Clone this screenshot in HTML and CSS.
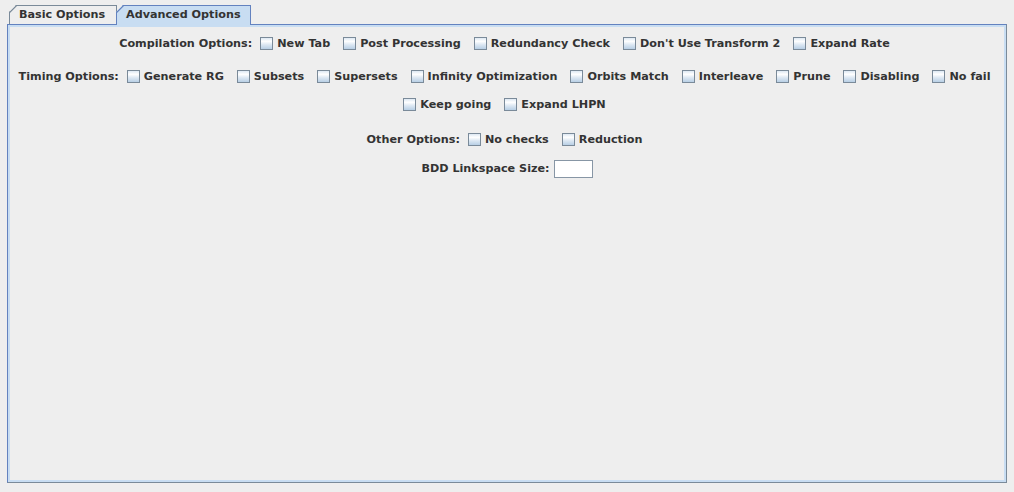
FILE: index.html
```html
<!DOCTYPE html>
<html>
<head>
<meta charset="utf-8">
<link rel="stylesheet" href="styles.css">
</head>
<body>
<div class="window">
  <div class="tabs">
    <div class="tab tab-basic">Basic Options</div>
    <div class="tab tab-adv selected">Advanced Options</div>
  </div>
  <div class="panel">
    <div class="row r1">
      <span class="label">Compilation Options:</span>
      <label class="cb"><span class="box"></span>New Tab</label>
      <label class="cb"><span class="box"></span>Post Processing</label>
      <label class="cb"><span class="box"></span>Redundancy Check</label>
      <label class="cb"><span class="box"></span>Don't Use Transform 2</label>
      <label class="cb"><span class="box"></span>Expand Rate</label>
    </div>
    <div class="row r2">
      <span class="label">Timing Options:</span>
      <label class="cb"><span class="box"></span>Generate RG</label>
      <label class="cb"><span class="box"></span>Subsets</label>
      <label class="cb"><span class="box"></span>Supersets</label>
      <label class="cb"><span class="box"></span>Infinity Optimization</label>
      <label class="cb"><span class="box"></span>Orbits Match</label>
      <label class="cb"><span class="box"></span>Interleave</label>
      <label class="cb"><span class="box"></span>Prune</label>
      <label class="cb"><span class="box"></span>Disabling</label>
      <label class="cb"><span class="box"></span>No fail</label>
    </div>
    <div class="row r2b">
      <label class="cb"><span class="box"></span>Keep going</label>
      <label class="cb"><span class="box"></span>Expand LHPN</label>
    </div>
    <div class="row r3">
      <span class="label">Other Options:</span>
      <label class="cb"><span class="box"></span>No checks</label>
      <label class="cb"><span class="box"></span>Reduction</label>
    </div>
    <div class="row r4">
      <span class="label">BDD Linkspace Size:</span>
      <span class="field"></span>
    </div>
  </div>
</div>
</body>
</html>
```

FILE: styles.css
```css
html, body {
  margin: 0;
  padding: 0;
  background: #eeeeee;
}

body {
  font-family: "DejaVu Sans", sans-serif;
  font-weight: bold;
  font-size: 11.2px;
  color: #333333;
}

.window {
  box-sizing: border-box;
  height: 492px;
  padding: 5px 7px 9px 7px;
  display: flex;
  flex-direction: column;
}

.tabs {
  display: flex;
  height: 19px;
  padding-left: 2px;
  position: relative;
  z-index: 1;
}

.tab {
  position: relative;
  box-sizing: border-box;
  height: 19px;
  border: 1px solid #7a8a99;
  border-bottom: none;
  padding-left: 9px;
  line-height: 18px;
  white-space: nowrap;
  background: #eeeeee;
  clip-path: polygon(7px 0, 100% 0, 100% 100%, 0 100%, 0 7px);
}

.tab::before {
  content: "";
  position: absolute;
  left: -1px;
  top: -1px;
  width: 8px;
  height: 8px;
  background: linear-gradient(to bottom right,
    transparent calc(50% - 1px),
    var(--edge) calc(50% - 0.4px),
    var(--edge) calc(50% + 0.4px),
    transparent calc(50% + 1px));
}

.tab-basic {
  --edge: #7a8a99;
  width: 108px;
}

.tab-adv {
  --edge: #6382bf;
  width: 135px;
  margin-left: -1px;
}

.tab.selected {
  background: #c8ddf2;
  border-color: #6382bf;
  height: 20px;
}

.panel {
  flex: 1;
  border: 1px solid #6382bf;
  border-right-color: #7a8a99;
  border-bottom-color: #7a8a99;
  box-shadow: inset 0 0 0 2px #c8ddf2;
  padding-top: 7px;
  display: flex;
  flex-direction: column;
}

.row {
  height: 23px;
  display: flex;
  justify-content: center;
  align-items: center;
  gap: 8px;
  white-space: nowrap;
}

.r2 { margin-top: 10px; }
.r2b { margin-top: 5px; }
.r3 { margin-top: 12px; }
.r4 { margin-top: 6px; gap: 4px; }

.cb {
  display: flex;
  align-items: center;
  gap: 4px;
  padding-right: 5px;
}

.box {
  display: block;
  box-sizing: border-box;
  width: 13px;
  height: 13px;
  border: 1px solid #7a8a99;
  background: linear-gradient(to bottom, #dde8f3 0%, #ffffff 30%, #dde8f3 60%, #b8cfe5 100%);
}

.field {
  display: block;
  box-sizing: border-box;
  width: 39px;
  height: 18px;
  border: 1px solid #8796a5;
  background: #ffffff;
}
```
